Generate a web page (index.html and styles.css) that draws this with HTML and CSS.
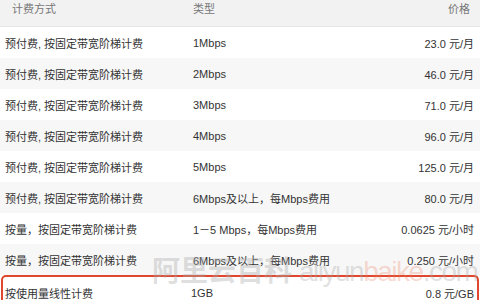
FILE: index.html
```html
<!DOCTYPE html>
<html lang="zh-CN">
<head>
<meta charset="utf-8">
<title>计费方式</title>
<link rel="stylesheet" href="styles.css">
</head>
<body>
<div class="page">
  <div class="table">
    <div class="row head">
      <div class="c1">计费方式</div>
      <div class="c2">类型</div>
      <div class="c3">价格</div>
    </div>
    <div class="row">
      <div class="c1">预付费, 按固定带宽阶梯计费</div>
      <div class="c2">1Mbps</div>
      <div class="c3">23.0 元/月</div>
    </div>
    <div class="row alt">
      <div class="c1">预付费, 按固定带宽阶梯计费</div>
      <div class="c2">2Mbps</div>
      <div class="c3">46.0 元/月</div>
    </div>
    <div class="row">
      <div class="c1">预付费, 按固定带宽阶梯计费</div>
      <div class="c2">3Mbps</div>
      <div class="c3">71.0 元/月</div>
    </div>
    <div class="row alt">
      <div class="c1">预付费, 按固定带宽阶梯计费</div>
      <div class="c2">4Mbps</div>
      <div class="c3">96.0 元/月</div>
    </div>
    <div class="row">
      <div class="c1">预付费, 按固定带宽阶梯计费</div>
      <div class="c2">5Mbps</div>
      <div class="c3">125.0 元/月</div>
    </div>
    <div class="row alt">
      <div class="c1">预付费, 按固定带宽阶梯计费</div>
      <div class="c2">6Mbps及以上，每Mbps费用</div>
      <div class="c3">80.0 元/月</div>
    </div>
    <div class="row">
      <div class="c1">按量，按固定带宽阶梯计费</div>
      <div class="c2">1－5 Mbps，每Mbps费用</div>
      <div class="c3">0.0625 元/小时</div>
    </div>
    <div class="row alt">
      <div class="c1">按量，按固定带宽阶梯计费</div>
      <div class="c2">6Mbps及以上，每Mbps费用</div>
      <div class="c3">0.250 元/小时</div>
    </div>
    <div class="row highlight">
      <div class="c1">按使用量线性计费</div>
      <div class="c2">1GB</div>
      <div class="c3">0.8 元/GB</div>
    </div>
  </div>
  <div class="watermark">
    <span class="wm-cn">阿里云百科</span>
    <span class="wm-en">aliyun<span class="wm-accent">baike</span>.com</span>
  </div>
</div>
</body>
</html>
```
FILE: styles.css
```css
html, body {
  margin: 0;
  padding: 0;
  background: #ffffff;
}

.page {
  position: relative;
  width: 480px;
  height: 300px;
  overflow: hidden;
  font-family: "Liberation Sans", "Noto Sans CJK SC", sans-serif;
  font-size: 11px;
  color: #333333;
}

.table {
  display: flex;
  flex-direction: column;
}

.row {
  display: grid;
  grid-template-columns: 188px 1fr auto;
  align-items: center;
  height: 31px;
  padding: 0 6px 0 5px;
  background: #ffffff;
}

.row.alt {
  background: #f7f7f7;
}

.row.head {
  height: 26px;
  align-items: start;
  line-height: 18px;
  padding: 0 10px 0 12px;
  grid-template-columns: 181px 1fr auto;
  background: #f2f2f2;
  border-bottom: 1px solid #e6e6e6;
  color: #777777;
}

.c3 {
  text-align: right;
}

.row.highlight {
  margin: 0 1px;
  padding: 0 3px 0 2px;
  border: 2px solid #e0472e;
  border-bottom: none;
  border-radius: 5px 5px 0 0;
  height: 31px;
  grid-template-columns: 186px 1fr auto;
}

.watermark {
  position: absolute;
  left: 152px;
  top: 253px;
  width: max-content;
  white-space: nowrap;
  display: flex;
  align-items: baseline;
  gap: 7px;
  pointer-events: none;
}

.wm-cn {
  font-family: "Noto Sans CJK SC", sans-serif;
  font-weight: 700;
  font-size: 28px;
  line-height: 32px;
  color: rgba(170, 170, 170, 0.38);
}

.wm-en {
  font-family: "Liberation Sans", sans-serif;
  font-size: 28px;
  letter-spacing: -1.5px;
  line-height: 32px;
  color: rgba(170, 170, 170, 0.35);
}

.wm-accent {
  color: rgba(235, 130, 100, 0.3);
}
```
